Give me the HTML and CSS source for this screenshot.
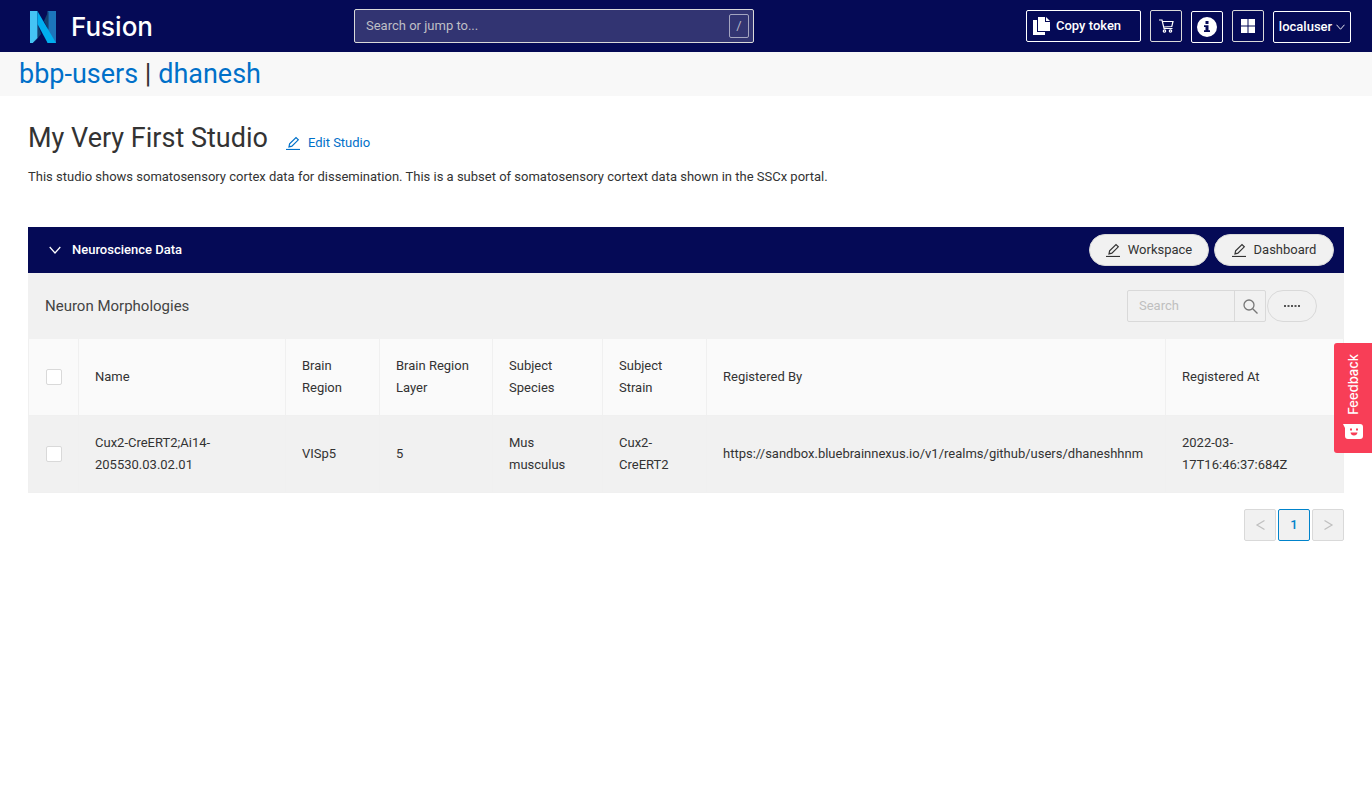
FILE: index.html
```html
<!DOCTYPE html>
<html lang="en">
<head>
<meta charset="utf-8">
<meta name="viewport" content="width=device-width, initial-scale=1">
<title>My Very First Studio</title>
<link rel="stylesheet" href="styles.css">
</head>
<body>
<svg class="defs" aria-hidden="true">
  <symbol id="edit" viewBox="0 0 14 14"><path d="M0 13.5h14" stroke-width="1.2"/><path d="M3 10.9l.6-3L10 1.500l2.300 2.300-6.400 6.400z"/></symbol>
  <symbol id="chevron" viewBox="0 0 12 8"><path d="M.7 1L6 7l5.300-6"/></symbol>
</svg>
<header class="topbar">
  <a class="brand" href="#">
    <svg class="logo" viewBox="0 0 28 32" preserveAspectRatio="none" aria-hidden="true">
      <path d="M19 0h9v32h-9z" fill="#1c75bc"/>
      <path d="M20 0v19l-5-9z" fill="#14406f"/>
      <path d="M8 12v14l-4 6 8-9z" fill="#14406f"/>
      <path d="M0 0h8v27l-5 5H0z" fill="#45c4f4"/>
      <path d="M8 0l20 32h-9L8 13z" fill="#00aeef"/>
    </svg>
    <span>Fusion</span>
  </a>
  <label class="jump"><input type="text" aria-label="Search or jump to" placeholder="Search or jump to..."><kbd>/</kbd></label>
  <div class="actions">
    <button class="nav copy"><svg width="17" height="18" viewBox="0 0 17 18" aria-hidden="true"><path d="M5 0h7v5h5v9H5z" fill="#fff"/><path d="M13 0l4 4h-4z" fill="#fff"/><path d="M0 3h4v12h8v3H0z" fill="#fff"/></svg>Copy token</button>
    <button class="nav square soft" aria-label="Cart"><svg width="15" height="14" viewBox="0 0 15 14" fill="none" stroke="#fff" stroke-width="1.200" aria-hidden="true"><path d="M0 1h3l2 8.500h8.500M3.500 2.500H14l-1.200 5L4.600 8"/><circle cx="5.500" cy="12" r="1.200"/><circle cx="11.500" cy="12" r="1.200"/></svg></button>
    <button class="nav square low" aria-label="Information"><svg width="20" height="20" viewBox="0 0 20 20" aria-hidden="true"><circle cx="10" cy="10" r="10" fill="#fff"/><path d="M8.500 4h3v3h-3zM7 8.300h4.500v5H13V15H7v-1.700h1.500V10H7z" fill="#050a56"/></svg></button>
    <button class="nav square soft" aria-label="Apps"><svg width="14" height="14" viewBox="0 0 14 14" fill="#fff" aria-hidden="true"><path d="M0 0h6.500v6.500H0zM7.500 0H14v6.500H7.500zM0 7.500h6.500V14H0zM7.500 7.500H14V14H7.500z"/></svg></button>
    <button class="nav user low">localuser<svg class="line" width="9" height="6" aria-hidden="true"><use href="#chevron"/></svg></button>
  </div>
</header>
<nav class="crumbs"><a href="#">bbp-users</a> | <a href="#">dhanesh</a></nav>
<main class="studio">
  <div class="title">
    <h1>My Very First Studio</h1>
    <button class="edit"><svg class="line" width="14" height="14" aria-hidden="true"><use href="#edit"/></svg>Edit Studio</button>
  </div>
  <p class="description">This studio shows somatosensory cortex data for dissemination. This is a subset of somatosensory cortext data shown in the SSCx portal.</p>
  <section>
    <div class="workspace">
      <button class="toggle"><svg class="line" width="12" height="8" aria-hidden="true"><use href="#chevron"/></svg>Neuroscience Data</button>
      <button class="pill"><svg class="line" width="14" height="14" aria-hidden="true"><use href="#edit"/></svg>Workspace</button>
      <button class="pill"><svg class="line" width="14" height="14" aria-hidden="true"><use href="#edit"/></svg>Dashboard</button>
    </div>
    <div class="toolbar">
      <h2>Neuron Morphologies</h2>
      <div class="search"><input type="text" aria-label="Search" placeholder="Search"><button aria-label="Run search"><svg width="15" height="15" viewBox="0 0 15 15" fill="none" stroke="#777" stroke-width="1.300" aria-hidden="true"><circle cx="6" cy="6" r="5"/><path d="M9.700 9.700l4.800 4.800"/></svg></button></div>
      <button class="more" aria-label="More"><svg width="16" height="2" viewBox="0 0 16 2" fill="#555" aria-hidden="true"><path d="M0 0h2v2H0zM3.500 0h2v2h-2zM7 0h2v2H7zM10.500 0h2v2h-2zM14 0h2v2h-2z"/></svg></button>
    </div>
    <table>
      <colgroup><col class="c-check"><col class="c-name"><col class="c-region"><col class="c-layer"><col class="c-species"><col class="c-strain"><col><col class="c-date"></colgroup>
      <thead><tr><th class="check"><input type="checkbox" aria-label="Select all"></th><th>Name</th><th>Brain Region</th><th>Brain Region Layer</th><th>Subject Species</th><th>Subject Strain</th><th>Registered By</th><th>Registered At</th></tr></thead>
      <tbody><tr><td class="check"><input type="checkbox" aria-label="Select row"></td><td>Cux2-CreERT2;Ai14-<wbr>205530.03.02.01</td><td>VISp5</td><td>5</td><td>Mus musculus</td><td>Cux2-<wbr>CreERT2</td><td class="url">https://sandbox.bluebrainnexus.io/v1/realms/github/users/dhaneshhnm</td><td>2022-03-<wbr>17T16:46:37:684Z</td></tr></tbody>
    </table>
    <nav class="pages" aria-label="Pagination">
      <button aria-label="Previous page"><svg class="line" width="9" height="10" viewBox="0 0 9 10" aria-hidden="true"><path d="M8.500.5L1 5l7.500 4.500"/></svg></button>
      <button class="current">1</button>
      <button aria-label="Next page"><svg class="line" width="9" height="10" viewBox="0 0 9 10" aria-hidden="true"><path d="M.5.500L8 5 .5 9.500"/></svg></button>
    </nav>
  </section>
</main>
<button class="feedback"><span>Feedback</span><svg width="20" height="15" viewBox="0 0 20 15" aria-hidden="true"><path d="M0 0h17q3 0 3 3v9q0 3-3 3H5q-3 0-3-3V4z" fill="#fff"/><path d="M7 4.500h2v2H7zM13 4.500h2v2h-2zM7.500 8.500h7q-.5 3-3.500 3t-3.500-3z" fill="#f83e57"/></svg></button>
</body>
</html>
```
FILE: styles.css
```css
* { box-sizing: border-box; }
body {
  margin: 0;
  background: #fff;
  color: #333;
  font: 13px/22px Roboto, sans-serif;
}
button, input { font: inherit; color: inherit; }
button { padding: 0; cursor: pointer; }
a { color: #0070c9; text-decoration: none; }
.defs { position: absolute; width: 0; height: 0; }
.line { fill: none; stroke: currentColor; stroke-width: 1.2; overflow: visible; }

.topbar {
  display: grid;
  grid-template-columns: 354px minmax(200px, 400px) 1fr;
  height: 52px;
  padding-right: 21px;
  align-items: center;
  background: #050a56;
  color: #fff;
}
.brand {
  display: flex;
  align-items: center;
  gap: 15px;
  padding: 2px 0 0 30px;
  color: #fff;
  font: 500 26px/32px Inter, sans-serif;
}
.logo { width: 26px; height: 32px; }
.jump {
  display: flex;
  align-items: center;
  height: 34px;
  padding: 0 4px 0 11px;
  border: 1px solid #d9d9d9;
  border-radius: 2px;
  background: #323472;
}
.jump input { flex: 1; min-width: 0; padding: 0; border: 0; outline: 0; background: none; }
.jump input::placeholder { color: #bfbfc5; opacity: 1; }
.jump kbd {
  width: 20px;
  height: 24px;
  border: 1px solid #a4a5c0;
  border-radius: 2px;
  color: #b7b8c9;
  font: inherit;
  text-align: center;
}
.actions { display: flex; justify-content: flex-end; align-items: center; gap: 9px; }
.nav {
  display: flex;
  align-items: center;
  justify-content: center;
  height: 32px;
  border: 1px solid #fff;
  border-radius: 2px;
  background: none;
  font-weight: 500;
}
.copy { width: 115px; padding-left: 6px; gap: 6px; justify-content: flex-start; }
.square { width: 32px; }
.soft { border-color: #d9d9d9; }
.low { margin-top: 2px; }
.user { width: 78px; gap: 4px; }

.crumbs { height: 44px; padding-left: 19px; background: #f8f8f8; font-size: 27px; line-height: 44px; }
.studio { padding: 20px 28px; }
.title { display: flex; align-items: center; gap: 18px; height: 44px; }
h1 { margin: 0; font-size: 27px; line-height: 44px; font-weight: 400; }
.edit { display: flex; align-items: center; gap: 8px; margin-top: 10px; border: 0; background: none; color: #0070c9; }
.description { margin: 6px 0 39px; }

.workspace { display: flex; align-items: center; gap: 5px; height: 46px; padding: 0 10px 0 21px; background: #050a56; }
.toggle { display: flex; align-items: center; gap: 11px; margin-right: auto; border: 0; background: none; color: #fff; font-weight: 500; }
.pill {
  display: flex;
  align-items: center;
  justify-content: center;
  gap: 8px;
  width: 120px;
  height: 32px;
  border: 1px solid #d9d9d9;
  border-radius: 16px;
  background: #f1f1f1;
}
.toolbar { display: flex; align-items: center; height: 66px; padding: 0 27px 0 17px; background: #f1f1f1; }
h2 { margin: 0 auto 0 0; font-size: 15px; line-height: 24px; font-weight: 400; color: #444; }
.search { display: flex; width: 139px; height: 32px; border: 1px solid #d9d9d9; border-radius: 2px; }
.search input { flex: 1; min-width: 0; padding: 0 11px; border: 0; outline: 0; background: none; }
.search input::placeholder { color: #bfbfbf; opacity: 1; }
.search button { display: grid; place-items: center; width: 31px; border: 0; border-left: 1px solid #d9d9d9; background: none; }
.more { display: grid; place-items: center; width: 50px; height: 32px; margin-left: 1px; border: 1px solid #d9d9d9; border-radius: 16px; background: none; }

table { width: 100%; table-layout: fixed; border-collapse: separate; border-spacing: 0; border-left: 1px solid #f0f0f0; }
th, td {
  height: 77px;
  padding: 16px;
  border-right: 1px solid #f0f0f0;
  border-bottom: 1px solid #f0f0f0;
  text-align: left;
  vertical-align: middle;
  font-weight: 400;
}
th { background: #fafafa; }
td { background: #f1f1f1; }
.url { white-space: nowrap; }
.check { padding: 0; text-align: center; }
.check input {
  display: block;
  width: 16px;
  height: 16px;
  margin: 0 auto;
  appearance: none;
  border: 1px solid #d9d9d9;
  border-radius: 2px;
  background: #fff;
}
.c-check { width: 50px; }
.c-name { width: 207px; }
.c-region { width: 94px; }
.c-layer { width: 113px; }
.c-species { width: 110px; }
.c-strain { width: 104px; }
.c-date { width: 178px; }

.pages { display: flex; justify-content: flex-end; gap: 2px; margin-top: 16px; }
.pages button { display: grid; place-items: center; width: 32px; height: 32px; border: 1px solid #d9d9d9; border-radius: 2px; background: #f1f1f1; color: #bfbfbf; }
.pages .current { border-color: #0083cb; color: #0083cb; font-weight: 500; }

.feedback {
  position: fixed;
  top: 343px;
  right: 0;
  display: flex;
  flex-direction: column;
  align-items: center;
  gap: 9px;
  width: 38px;
  height: 110px;
  padding-top: 11px;
  border: 0;
  border-radius: 3px 0 0 3px;
  background: #f83e57;
  color: #fff;
  font: 500 13px/16px Inter, sans-serif;
}
.feedback span { writing-mode: vertical-rl; rotate: 180deg; }
```
